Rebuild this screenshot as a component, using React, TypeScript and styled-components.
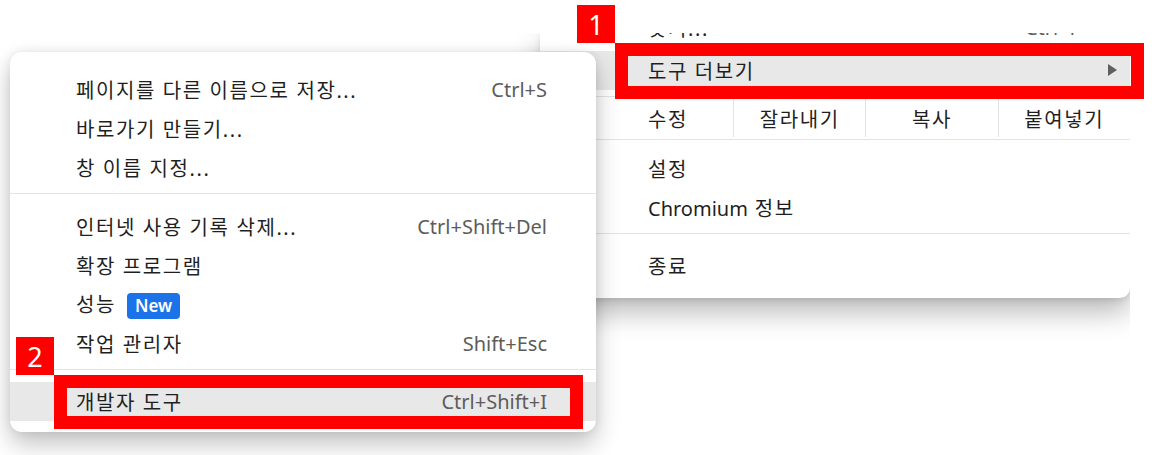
import React from 'react';
import styled, { createGlobalStyle } from 'styled-components';

const GlobalStyle = createGlobalStyle`
  body {
    margin: 0;
    background: #ffffff;
    font-family: "Noto Sans", "Noto Sans CJK KR", sans-serif;
    color: #1f1f1f;
  }
`;

const Stage = styled.div`
  position: relative;
  width: 1155px;
  height: 455px;
  overflow: hidden;
  box-sizing: border-box;
  padding: 33px 0 0 540px;
`;

const Item = styled.div<{ $active?: boolean }>`
  display: flex;
  align-items: center;
  height: 39px;
  padding: 0 49px 0 66px;
  font-size: 20px;
  white-space: nowrap;
  background: ${({ $active }) => ($active ? '#e8e8e8' : 'transparent')};
`;

const MainMenu = styled.div`
  width: 590px;
  background: #ffffff;
  border-radius: 0 0 10px 10px;
  overflow: hidden;
  box-shadow: 0 14px 28px rgba(0, 0, 0, 0.28), 0 2px 6px rgba(0, 0, 0, 0.1);
  clip-path: inset(0 0 -80px -80px);

  ${Item} {
    padding: 0 50px 0 108px;
  }
`;

const SubMenu = styled.div`
  position: absolute;
  left: 10px;
  top: 52px;
  width: 586px;
  box-sizing: border-box;
  padding: 18px 0 11px;
  background: #ffffff;
  border-radius: 12px;
  box-shadow: 0 12px 24px rgba(0, 0, 0, 0.24), 0 0 10px rgba(0, 0, 0, 0.08);
`;

// only the bottom edge of this row shows below the crop line
const ClippedRow = styled(Item)`
  margin: -25px 0 3.5px;
`;

// Hangul in the reference runs wider than Noto CJK, so labels get extra tracking
const Label = styled.span`
  flex: 1;
  letter-spacing: 1.6px;
`;

const Latin = styled.span`
  letter-spacing: 0;
`;

const Shortcut = styled.span`
  color: #5c5c5c;
`;

const Arrow = styled.svg`
  margin-right: -37px;
  fill: #606060;
`;

const Badge = styled.span`
  display: inline-flex;
  align-items: center;
  vertical-align: middle;
  height: 26px;
  margin: -2px 0 0 11px;
  padding: 0 8px;
  border-radius: 4px;
  background: #1a73e8;
  color: #ffffff;
  font-size: 17px;
  font-weight: 600;
  letter-spacing: 0;
`;

const Separator = styled.div<{ $above: number; $below: number }>`
  height: 1px;
  background: #e3e3e3;
  margin: ${({ $above, $below }) => `${$above}px 0 ${$below}px`};
`;

const EditRow = styled.div`
  display: flex;
  align-items: center;
  height: 42px;
  font-size: 20px;
  letter-spacing: 1.6px;
`;

const EditLabel = styled.span`
  flex: 1;
  padding-left: 108px;
`;

const EditCell = styled.span`
  display: flex;
  align-items: center;
  justify-content: center;
  width: 132.3px;
  height: 38px;
  border-left: 1px solid #e3e3e3;
  box-sizing: border-box;
`;

const Frame = styled.div<{ $x: number; $y: number; $w: number; $h: number }>`
  position: absolute;
  left: ${({ $x }) => $x}px;
  top: ${({ $y }) => $y}px;
  width: ${({ $w }) => $w}px;
  height: ${({ $h }) => $h}px;
  box-sizing: border-box;
  border: 13px solid #ff0000;
`;

const Marker = styled.div<{ $x: number; $y: number }>`
  position: absolute;
  left: ${({ $x }) => $x}px;
  top: ${({ $y }) => $y}px;
  width: 38px;
  height: 38px;
  display: flex;
  align-items: center;
  justify-content: center;
  background: #ff0000;
  color: #ffffff;
  font-size: 27px;
`;

const App: React.FC = () => (
  <Stage>
    <GlobalStyle />
    <MainMenu>
      <ClippedRow>
        <Label>찾기...</Label>
        <Shortcut>Ctrl+F</Shortcut>
      </ClippedRow>
      <Item $active>
        <Label>도구 더보기</Label>
        <Arrow width="9" height="12" viewBox="0 0 9 12">
          <path d="M0 0 L9 6 L0 12 Z" />
        </Arrow>
      </Item>
      <Separator $above={6.5} $below={0} />
      <EditRow>
        <EditLabel>수정</EditLabel>
        <EditCell>잘라내기</EditCell>
        <EditCell>복사</EditCell>
        <EditCell>붙여넣기</EditCell>
      </EditRow>
      <Separator $above={0} $below={8.5} />
      <Item>
        <Label>설정</Label>
      </Item>
      <Item>
        <Label>
          <Latin>Chromium</Latin> 정보
        </Label>
      </Item>
      <Separator $above={6} $below={12.5} />
      <Item>
        <Label>종료</Label>
      </Item>
      <div style={{ height: 12.5 }} />
    </MainMenu>

    <SubMenu>
      <Item>
        <Label>페이지를 다른 이름으로 저장...</Label>
        <Shortcut>Ctrl+S</Shortcut>
      </Item>
      <Item>
        <Label>바로가기 만들기...</Label>
      </Item>
      <Item>
        <Label>창 이름 지정...</Label>
      </Item>
      <Separator $above={6} $below={12.5} />
      <Item>
        <Label>인터넷 사용 기록 삭제...</Label>
        <Shortcut>Ctrl+Shift+Del</Shortcut>
      </Item>
      <Item>
        <Label>확장 프로그램</Label>
      </Item>
      <Item>
        <Label>
          성능<Badge>New</Badge>
        </Label>
      </Item>
      <Item>
        <Label>작업 관리자</Label>
        <Shortcut>Shift+Esc</Shortcut>
      </Item>
      <Separator $above={6} $below={12.5} />
      <Item $active>
        <Label>개발자 도구</Label>
        <Shortcut>Ctrl+Shift+I</Shortcut>
      </Item>
    </SubMenu>

    <Marker $x={577} $y={5}>1</Marker>
    <Frame $x={615} $y={43} $w={529} $h={56} />
    <Marker $x={16} $y={337}>2</Marker>
    <Frame $x={54} $y={375} $w={529} $h={54} />
  </Stage>
);

export default App;
